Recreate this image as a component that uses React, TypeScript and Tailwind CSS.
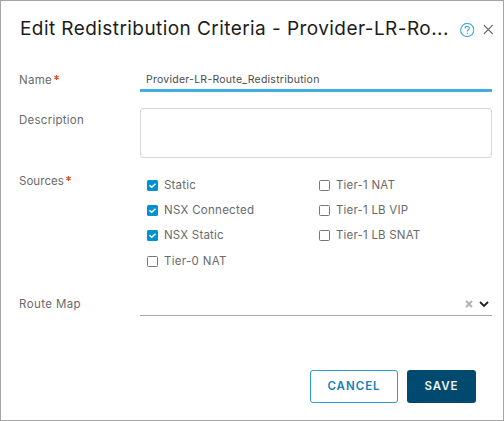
import React from "react";

function Check({ label, checked = false, tracking }: { label: string; checked?: boolean; tracking: string }) {
  return (
    <label className="flex h-[25.2px] items-center">
      <span className={`flex size-[11px] shrink-0 items-center justify-center rounded-[1.5px] ${checked ? "bg-[#0091d4]" : "border border-[#777] bg-white"}`}>
        {checked && (
          <svg width="11" height="11" viewBox="0 0 11 11" fill="none" stroke="#fff" strokeWidth="1.5">
            <path d="M2.5 5.2 4.7 7.3 8.5 3.7" />
          </svg>
        )}
      </span>
      <span className={`ml-[6px] whitespace-nowrap ${tracking}`}>{label}</span>
    </label>
  );
}

function Label({ text, required = false, tracking }: { text: string; required?: boolean; tracking: string }) {
  return (
    <div className="flex w-[121px] shrink-0 leading-4">
      <span className={tracking}>{text}</span>
      {required && (
        <svg className="ml-[2px] mt-[3px]" width="5" height="5" viewBox="0 0 5 5" fill="none" stroke="#e04b2c" strokeWidth="1.2">
          <path d="M2.5 0v5M.3 1.3l4.4 2.4M4.7 1.3.3 3.7" />
        </svg>
      )}
    </div>
  );
}

export default function App() {
  return (
    <div className="h-[421px] w-[504px] overflow-hidden border border-[#a5a5a5] bg-white font-['Inter',sans-serif] text-[11.5px] text-[#6a6a6a]">
      <header className="flex h-[57px] items-center pl-[19px] pr-[9px] text-[#1c1c1c]">
        <h1 className="w-[429px] whitespace-nowrap text-[19px] font-normal tracking-[0.43px]">Edit Redistribution Criteria - Provider-LR-Ro...</h1>
        <svg className="ml-[10px] mt-px" width="16" height="16" viewBox="0 0 16 16" fill="none" stroke="#49afd9" strokeWidth="1.3">
          <circle cx="8.5" cy="8" r="6.8" />
          <path d="M6.3 6.3C6.4 3.7 10.7 3.8 10.7 6.2 10.7 7.8 8.5 7.8 8.5 9.5" />
          <path d="M8.5 10.8v1.3" />
        </svg>
        <svg className="ml-2" width="12" height="11" viewBox="0 0 12 11" fill="none" stroke="#666" strokeWidth="1.3">
          <path d="m2 1 9 9M11 1 2 10" />
        </svg>
      </header>
      <form className="flex flex-col pl-[18px] pr-[11px]">
        <div className="flex h-[34px]">
          <div className="pt-[14px]"><Label text="Name" required tracking="tracking-[0.3px]" /></div>
          <div className="flex h-[34px] w-[352px] items-end border-b-[3px] border-[#40acdf] pb-[1px] pl-[6px] text-[10.5px] leading-4 tracking-[0.25px] text-[#4c4c4c]">Provider-LR-Route_Redistribution</div>
        </div>
        <div className="mt-4 flex">
          <div className="pt-[4px]"><Label text="Description" tracking="tracking-[0.25px]" /></div>
          <div className="h-[50px] w-[352px] rounded-[3px] border border-[#d7d7d7]" />
        </div>
        <div className="mt-[15px] flex h-[101px]">
          <Label text="Sources" required tracking="tracking-[0.05px]" />
          <div className="flex pl-[7px]">
            <div className="w-[172px]">
              <Check label="Static" checked tracking="tracking-[0.2px]" />
              <Check label="NSX Connected" checked tracking="tracking-[0.28px]" />
              <Check label="NSX Static" checked tracking="tracking-[0.2px]" />
              <Check label="Tier-0 NAT" tracking="tracking-[0.3px]" />
            </div>
            <div>
              <Check label="Tier-1 NAT" tracking="tracking-[0.2px]" />
              <Check label="Tier-1 LB VIP" tracking="tracking-[0.2px]" />
              <Check label="Tier-1 LB SNAT" tracking="tracking-[0.2px]" />
            </div>
          </div>
        </div>
        <div className="mt-[22px] flex h-[20px]">
          <Label text="Route Map" tracking="tracking-[0.4px]" />
          <div className="flex w-[352px] items-center justify-end gap-[6px] border-b border-[#aaa] pb-[4px] pr-[3px]">
            <svg width="8" height="8" viewBox="0 0 8 8" fill="none" stroke="#b2b2b2" strokeWidth="2">
              <path d="m1 1 6 6M7 1 1 7" />
            </svg>
            <svg width="10" height="8" viewBox="0 0 10 8" fill="none" stroke="#222" strokeWidth="1.8">
              <path d="m1 2 4 4 4-4" />
            </svg>
          </div>
        </div>
      </form>
      <footer className="mt-[54px] flex justify-end gap-[9px] pr-[27px] text-[11.5px] font-semibold">
        <button className="h-[33px] w-[88px] rounded-[3px] border border-[#2e9bd2] tracking-[1px] text-[#167eb8]">CANCEL</button>
        <button className="h-[33px] w-[69px] rounded-[3px] bg-[#004a70] tracking-[1px] text-[#eef4f7]">SAVE</button>
      </footer>
    </div>
  );
}
